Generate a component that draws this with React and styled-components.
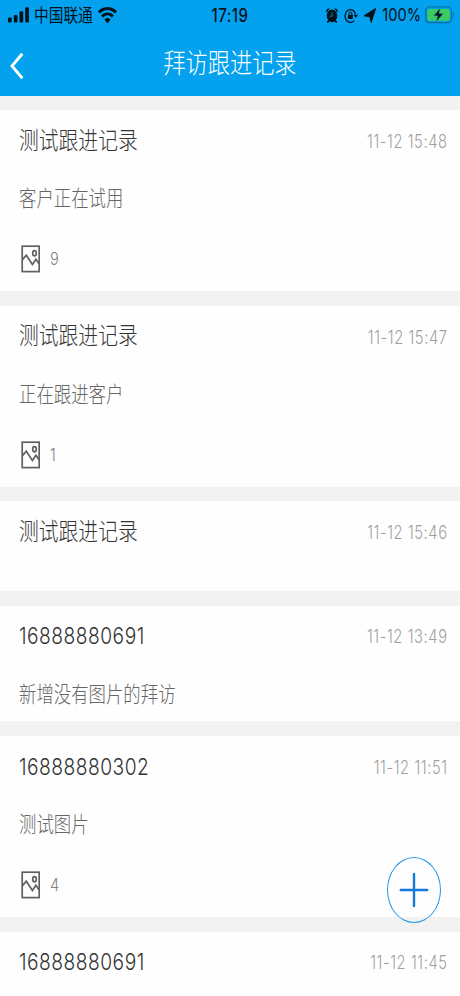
import React from "react";
import styled, { createGlobalStyle } from "styled-components";

const records = [
  { id: 1, name: "测试跟进记录", time: "11-12 15:48", content: "客户正在试用", images: 9 },
  { id: 2, name: "测试跟进记录", time: "11-12 15:47", content: "正在跟进客户", images: 1 },
  { id: 3, name: "测试跟进记录", time: "11-12 15:46" },
  { id: 4, name: "16888880691", time: "11-12 13:49", content: "新增没有图片的拜访" },
  { id: 5, name: "16888880302", time: "11-12 11:51", content: "测试图片", images: 4 },
  { id: 6, name: "16888880691", time: "11-12 11:45" },
];

const SignalIcon = () => (
  <svg width="22" height="16" viewBox="0 0 22 16" preserveAspectRatio="none">
    <rect x="0" y="10.5" width="3.7" height="5" rx="1" />
    <rect x="5.8" y="8" width="3.7" height="7.5" rx="1" />
    <rect x="11.5" y="4.3" width="3.7" height="11.2" rx="1" />
    <rect x="17.2" y="0.3" width="3.7" height="15.2" rx="1" />
  </svg>
);

const WifiIcon = () => (
  <svg width="19" height="17" viewBox="0 0 19 17" fill="none" stroke="#04121c">
    <path d="M1 5.6 C5.6 0.1 13.4 0.1 18 5.6" strokeWidth="3" />
    <path d="M4.1 9.5 C7 5.9 12 5.9 14.9 9.5" strokeWidth="2.8" />
    <path d="M6.4 12.6 C8.2 10.4 10.8 10.4 12.6 12.6 L9.5 16.4 Z" fill="#04121c" stroke="none" />
  </svg>
);

const AlarmIcon = () => (
  <svg width="12" height="15" viewBox="0 0 12 15">
    <ellipse cx="6" cy="7.8" rx="5.3" ry="6.4" />
    <path d="M0.3 4.4 C-0.2 1.4 1.6 -0.2 4 0.6 Z M11.7 4.4 C12.2 1.4 10.4 -0.2 8 0.6 Z" />
    <path d="M1.3 14.6 L3 12.4 M10.7 14.6 L9 12.4" stroke="#04121c" strokeWidth="1.7" />
    <path d="M6.2 4.2 V8.2 H3.6" fill="none" stroke="#0686c5" strokeWidth="0.9" />
  </svg>
);

const RotationLockIcon = () => (
  <svg width="14" height="15" viewBox="0 0 14 15" fill="none" stroke="#04121c">
    <path d="M10.2 12.6 A5.4 6.4 0 1 1 11.6 6.2" strokeWidth="1.3" />
    <path d="M9.4 6.8 H14 L11.7 10 Z" fill="#04121c" stroke="none" />
    <rect x="4" y="6.7" width="4.8" height="4.2" rx="0.6" fill="#04121c" stroke="none" />
    <path d="M5 7 V5.6 A1.4 1.6 0 0 1 7.8 5.6 V7" strokeWidth="1" />
  </svg>
);

const LocationIcon = () => (
  <svg width="12" height="15" viewBox="0 0 12 15">
    <path d="M11.4 0.8 L7.2 14 L6 8.6 L0.6 7.8 Z" stroke="#04121c" strokeLinejoin="round" strokeWidth="1.2" />
  </svg>
);

const BatteryIcon = () => (
  <svg width="30" height="18" viewBox="0 0 30 18">
    <rect x="0.7" y="1" width="25.8" height="15.6" rx="3.6" fill="none" stroke="#086e9f" strokeWidth="1.2" />
    <rect x="2.4" y="2.9" width="22.4" height="11.8" rx="2.2" fill="#3bcb62" />
    <path d="M28 6.4 C29.4 7.2 29.4 10.4 28 11.2 Z" fill="#086e9f" />
    <path d="M15.3 1.8 L8.6 9.9 H12.5 L11.4 15.8 L18.3 7.6 H14.2 Z" fill="#04121c" stroke="#23a88b" strokeWidth="0.7" />
  </svg>
);

const BackIcon = () => (
  <svg width="14" height="28" viewBox="0 0 14 28" fill="none">
    <path d="M12.3 1.8 L2 14 L12.3 26.2" stroke="#fff" strokeWidth="2.9" />
  </svg>
);

const PictureIcon = () => (
  <svg width="20" height="28" viewBox="0 0 20 28" fill="none" stroke="#606060" strokeWidth="1.7">
    <rect x="2.2" y="1.2" width="17" height="25.4" />
    <path d="M2.3 14.9 L6.3 10.2 L12.4 19.4 L15.9 14.2 L19 18.8" />
    <ellipse cx="14.5" cy="8.3" rx="1.8" ry="2.6" />
  </svg>
);

const PlusIcon = () => (
  <svg width="30" height="36" viewBox="0 0 30 36">
    <path d="M1.9 18 H28.1" stroke="#1479df" strokeWidth="2.7" strokeLinecap="round" />
    <path d="M15 1.9 V34.1" stroke="#1479df" strokeWidth="2.4" strokeLinecap="round" />
  </svg>
);

export default function App() {
  return (
    <>
      <GlobalStyle />
      <Page>
        <StatusBar>
          <StatusLeft>
            <SignalIcon />
            <Carrier>中国联通</Carrier>
            <WifiIcon />
          </StatusLeft>
          <Clock>17:19</Clock>
          <StatusRight>
            <AlarmIcon />
            <RotationLockIcon />
            <LocationIcon />
            <Percent>100%</Percent>
            <BatteryIcon />
          </StatusRight>
        </StatusBar>
        <NavBar>
          <BackButton aria-label="返回">
            <BackIcon />
          </BackButton>
          <NavTitle>拜访跟进记录</NavTitle>
        </NavBar>
        <RecordList>
          {records.map((record) => (
            <Record key={record.id}>
              <RecordHead>
                <Name $number={/^\d+$/.test(record.name)}>{record.name}</Name>
                <Time>{record.time}</Time>
              </RecordHead>
              {record.content && (
                <ContentRow>
                  <Content>{record.content}</Content>
                </ContentRow>
              )}
              {record.images && (
                <ImageRow>
                  <PictureIcon />
                  <Count>{record.images}</Count>
                </ImageRow>
              )}
            </Record>
          ))}
        </RecordList>
        <AddButton aria-label="新增">
          <PlusIcon />
        </AddButton>
      </Page>
    </>
  );
}

const GlobalStyle = createGlobalStyle`
  * {
    box-sizing: border-box;
  }
  body {
    margin: 0;
    overflow: hidden;
    font-family: Inter, "Noto Sans CJK SC", sans-serif;
  }
  svg {
    display: block;
    flex-shrink: 0;
  }
`;

const Page = styled.div`
  position: relative;
  width: 460px;
  height: 996px;
  overflow: hidden;
  background: #f2f2f2;
`;

/* all type is tall and narrow */
const Text = styled.span`
  display: block;
  line-height: 1;
  white-space: nowrap;
  transform: scaleY(1.22);
`;

const StatusBar = styled.div`
  display: grid;
  grid-template-columns: 1fr auto 1fr;
  align-items: center;
  height: 30px;
  padding: 0 5px 0 8px;
  background: #03a1ee;
  color: #04121c;
  fill: #04121c;
`;

const StatusLeft = styled.div`
  display: flex;
  align-items: center;
  gap: 5px;
`;

const StatusRight = styled.div`
  display: flex;
  align-items: center;
  justify-content: flex-end;
  gap: 6px;
`;

const Carrier = styled(Text)`
  margin-left: -1px;
  padding-top: 2px;
  font-size: 14.7px;
`;

const Clock = styled(Text)`
  padding-right: 3px;
  font-size: 15px;
  font-weight: 500;
  letter-spacing: 0.5px;
`;

const Percent = styled(Text)`
  margin-right: -2px;
  font-size: 14.6px;
`;

const NavBar = styled.div`
  display: grid;
  grid-template-columns: 40px 1fr 40px;
  align-items: center;
  height: 66px;
  background: #03a1ee;
`;

const BackButton = styled.button`
  width: 40px;
  height: 66px;
  padding: 5px 0 0 10px;
  border: 0;
  background: none;
`;

const NavTitle = styled(Text)`
  padding-top: 1px;
  text-align: center;
  font-size: 22.2px;
  font-weight: 300;
  color: #fff;
`;

const RecordList = styled.div`
  display: flex;
  flex-direction: column;
  gap: 14.8px;
  padding-top: 14.3px;
`;

const Record = styled.div`
  min-height: 89.5px;
  background: #fefefe;
`;

const RecordHead = styled.div`
  display: flex;
  align-items: center;
  justify-content: space-between;
  height: 62px;
  padding: 0 13px 0 19px;
`;

const Name = styled(Text)`
  padding-top: ${(props) => (props.$number ? "0" : "1px")};
  font-size: ${(props) => (props.$number ? "19.2px" : "19.8px")};
  font-weight: ${(props) => (props.$number ? 350 : 300)};
  letter-spacing: ${(props) => (props.$number ? "0.5px" : "0")};
  color: #333;
`;

const Time = styled(Text)`
  padding-top: 2px;
  margin-right: -0.6px;
  font-size: 14.7px;
  font-weight: 350;
  letter-spacing: 0.6px;
  color: #a0a0a0;
`;

const ContentRow = styled.div`
  display: flex;
  align-items: center;
  height: 53.6px;
  padding: 0 19px;
`;

const Content = styled(Text)`
  font-size: 17.4px;
  font-weight: 300;
  color: #666;
`;

const ImageRow = styled.div`
  display: flex;
  align-items: center;
  gap: 10px;
  height: 65.2px;
  padding: 1.5px 0 0 20px;
`;

const Count = styled(Text)`
  font-size: 14.6px;
  font-weight: 350;
  color: #808080;
`;

const AddButton = styled.button`
  position: absolute;
  left: 387px;
  top: 857px;
  display: flex;
  align-items: center;
  justify-content: center;
  width: 54px;
  height: 66px;
  padding: 0;
  border: 1.5px solid #2196e6;
  border-radius: 50%;
  background: none;
`;
